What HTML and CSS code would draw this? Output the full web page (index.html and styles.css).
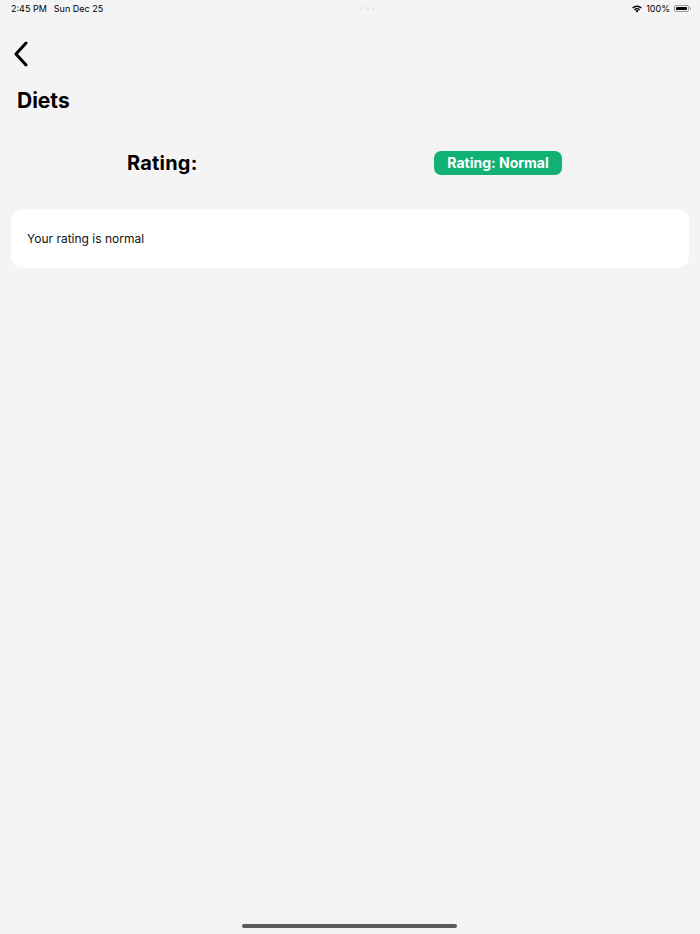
FILE: index.html
```html
<!DOCTYPE html>
<html lang="en">
<head>
    <meta charset="UTF-8">
    <title>Diets</title>
    <link rel="stylesheet" href="styles.css">
</head>
<body>

    <!-- Barre de statut -->
    <div class="status-bar">
        <div class="status-left">
            <span>2:45 PM</span>
            <span>Sun Dec 25</span>
        </div>
        <div class="status-dots"><i></i><i></i><i></i></div>
        <div class="status-right">
            <svg class="wifi" width="12" height="9" viewBox="0 0 12 9">
                <path d="M6 8.6 L4.3 6.8 A2.5 2.5 0 0 1 7.7 6.8 Z" fill="#000"/>
                <path d="M2.9 5.4 A4.4 4.4 0 0 1 9.1 5.4 L8.1 6.4 A3 3 0 0 0 3.9 6.4 Z" fill="#000"/>
                <path d="M1.1 3.6 A7 7 0 0 1 10.9 3.6 L9.9 4.6 A5.6 5.6 0 0 0 2.1 4.6 Z" fill="#000"/>
            </svg>
            <span>100%</span>
            <div class="battery"><div class="battery-level"></div></div>
        </div>
    </div>

    <div class="page">
        <button class="back">
            <svg width="16" height="26" viewBox="0 0 16 26">
                <path d="M13 2 L3 13 L13 24" fill="none" stroke="#000" stroke-width="3" stroke-linecap="round" stroke-linejoin="round"/>
            </svg>
        </button>

        <h1>Diets</h1>

        <div class="rating-row">
            <h2>Rating:</h2>
            <span class="badge">Rating: Normal</span>
        </div>

        <div class="card">
            <p>Your rating is normal</p>
        </div>
    </div>

    <div class="home-indicator"></div>

</body>
</html>
```

FILE: styles.css
```css
body {
    margin: 0;
    height: 934px;
    background: #f4f4f4;
    font-family: 'Inter', sans-serif;
    color: #000;
    position: relative;
    overflow: hidden;
}

/* Barre de statut */
.status-bar {
    display: flex;
    justify-content: space-between;
    align-items: center;
    height: 16px;
    padding: 0 11px;
    font-size: 9px;
    font-weight: 400;
}

.status-left {
    display: flex;
    gap: 7px;
}

.status-dots {
    display: flex;
    gap: 3px;
}

.status-dots i {
    width: 3px;
    height: 3px;
    border-radius: 50%;
    background: #e6e6e6;
}

.status-right {
    display: flex;
    align-items: center;
    gap: 3px;
}

.battery {
    width: 15px;
    height: 7px;
    border: 1px solid #999;
    border-radius: 2px;
    padding: 1px;
    box-sizing: border-box;
    margin-left: 1px;
    position: relative;
}

.battery::after {
    content: "";
    position: absolute;
    right: -3px;
    top: 1px;
    width: 1px;
    height: 3px;
    background: #999;
    border-radius: 0 1px 1px 0;
}

.battery-level {
    width: 100%;
    height: 100%;
    background: #000;
    border-radius: 1px;
}

/* Contenu */
.page {
    padding: 0 11px;
}

.back {
    display: block;
    border: none;
    background: none;
    padding: 0;
    margin: 25px 0 0 2px;
    height: 26px;
    cursor: pointer;
}

h1 {
    font-size: 21px;
    font-weight: 700;
    margin: 20px 0 0 6px;
    line-height: 28px;
}

.rating-row {
    display: flex;
    justify-content: space-between;
    align-items: center;
    padding: 0 127px 0 116px;
    margin-top: 36px;
    height: 24px;
}

h2 {
    font-size: 20px;
    font-weight: 700;
    margin: 0;
    letter-spacing: 0.2px;
}

.badge {
    background: #10b173;
    color: white;
    font-size: 14px;
    font-weight: 700;
    height: 24px;
    line-height: 24px;
    padding: 0 11px;
    border-radius: 7px;
    width: 106px;
    text-align: center;
}

.card {
    background: white;
    border-radius: 12px;
    margin-top: 34px;
    height: 59px;
    display: flex;
    align-items: center;
    padding: 0 16px;
}

.card p {
    margin: 0;
    font-size: 12px;
    color: #111;
}

.home-indicator {
    position: absolute;
    left: 242px;
    bottom: 6px;
    width: 215px;
    height: 4px;
    border-radius: 2px;
    background: #5a5a5a;
}
```
